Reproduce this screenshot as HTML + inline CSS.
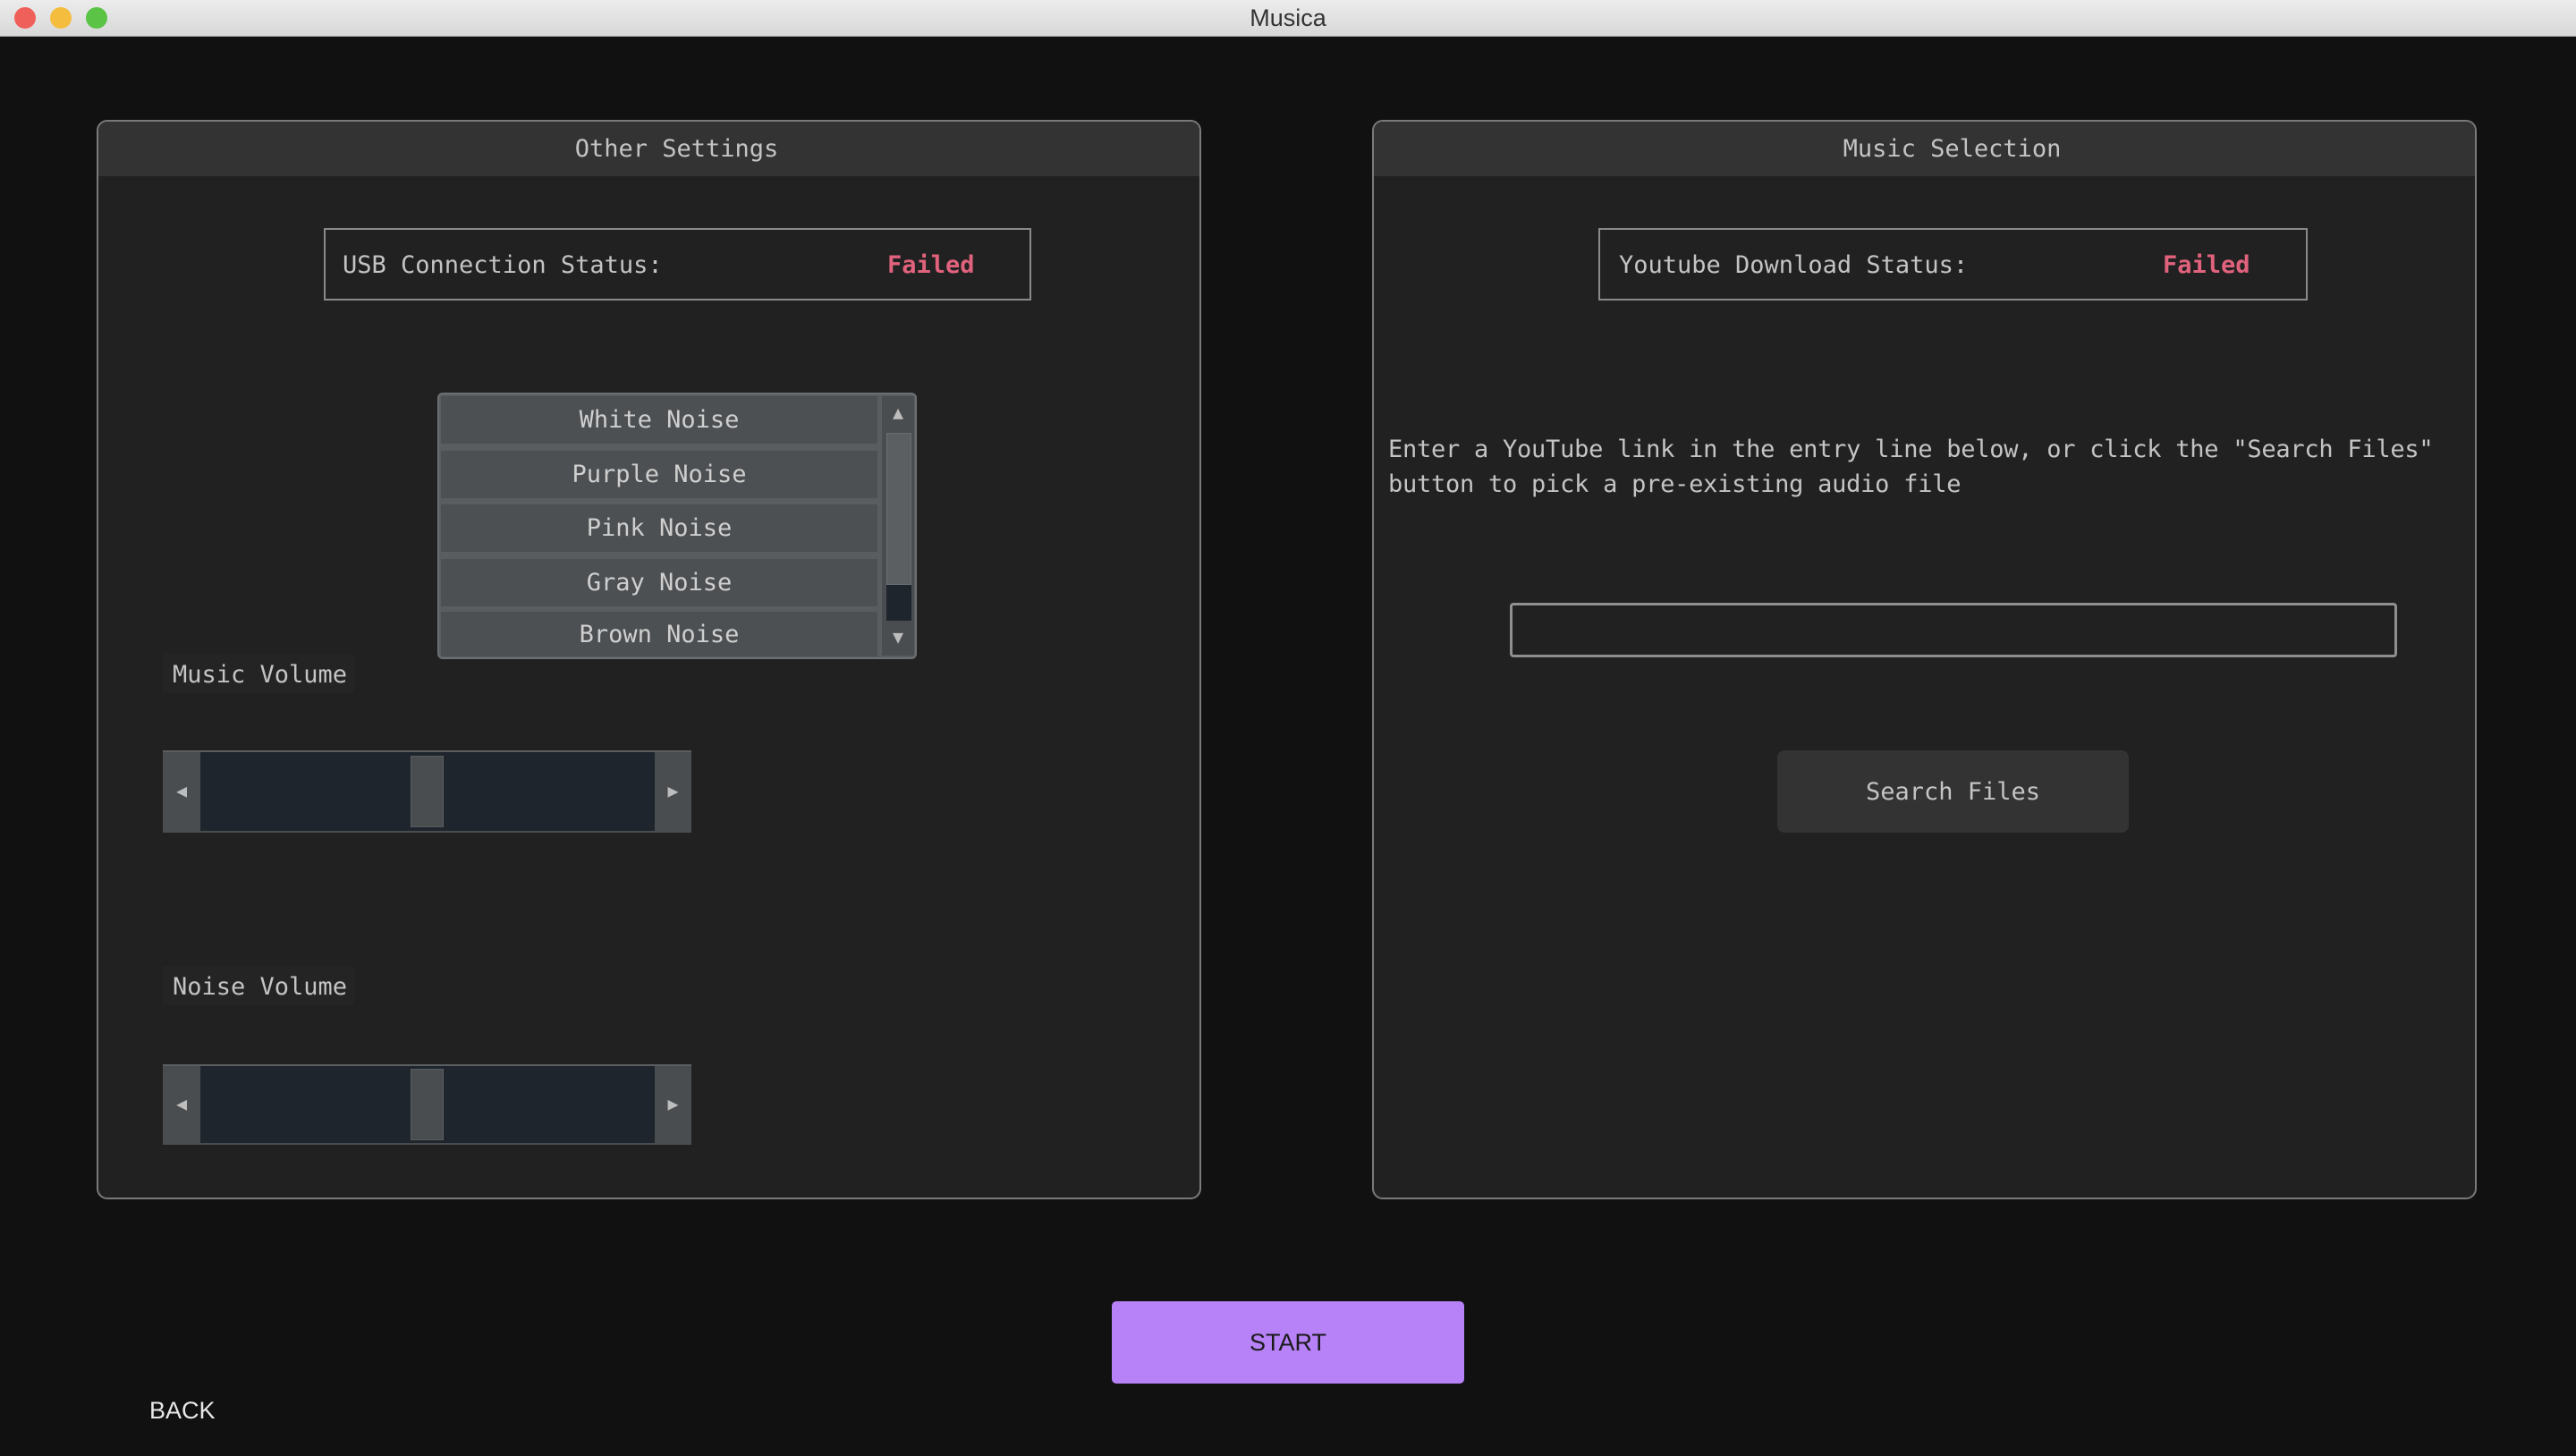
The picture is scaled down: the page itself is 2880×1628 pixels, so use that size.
<!DOCTYPE html>
<html><head><meta charset="utf-8"><style>
*{margin:0;padding:0;box-sizing:border-box}
body{width:2880px;height:1628px;background:#111;position:relative;overflow:hidden;font-family:"DejaVu Sans Mono","Liberation Mono",monospace;color:#c4c4c4;font-size:27px}
.a{position:absolute}
.tb{left:0;top:0;width:2880px;height:41px;background:linear-gradient(#ececec,#d8d8d8);border-bottom:1px solid #b0b0b0;text-align:center;font-family:"Liberation Sans",sans-serif;color:#333;font-size:27px;line-height:41px}
.dot{top:8px;width:24px;height:24px;border-radius:50%}
.panel{background:#212121;border:2px solid #7a7a7a;border-radius:12px;overflow:hidden}
.hdr{left:0;top:0;right:0;height:61px;background:#333;text-align:center;line-height:61px;padding-left:62px}
.box{border:2px solid #8a8a8a}
.fail{color:#e0627c;font-weight:bold}
.item{left:4px;width:488px;height:53px;background:#4d5053;text-align:center;line-height:53px;color:#cfcfcf}
.sl{background:#4a4d50;border-top:2px solid #5b5e61}
.trk{background:#1f252c}
.arr{color:#bdbdbd;font-size:20px;text-align:center}
</style></head><body>
<div class="a tb">Musica</div>
<div class="a dot" style="left:16px;background:#f0605a"></div>
<div class="a dot" style="left:56px;background:#f5bd3d"></div>
<div class="a dot" style="left:96px;background:#5bc346"></div>

<div class="a panel" style="left:108px;top:134px;width:1235px;height:1207px">
 <div class="a hdr">Other Settings</div>
</div>
<div class="a box" style="left:362px;top:255px;width:791px;height:81px"></div>
<div class="a" style="left:383px;top:281px">USB Connection Status:</div>
<div class="a fail" style="left:992px;top:281px">Failed</div>

<div class="a" style="left:489px;top:439px;width:536px;height:298px;background:#5a5d60;border:2px solid #6d7073;border-radius:6px"></div>
<div class="a item" style="left:493px;top:443px">White Noise</div>
<div class="a item" style="left:493px;top:504px">Purple Noise</div>
<div class="a item" style="left:493px;top:564px">Pink Noise</div>
<div class="a item" style="left:493px;top:625px">Gray Noise</div>
<div class="a item" style="left:493px;top:684px;height:50px;line-height:52px">Brown Noise</div>
<div class="a" style="left:986px;top:443px;width:36px;height:290px;background:#4a4d50"></div>
<div class="a arr" style="left:986px;top:449px;width:36px">▲</div>
<div class="a" style="left:991px;top:484px;width:28px;height:170px;background:#5c5f62;border:1px solid #6a6d70"></div>
<div class="a" style="left:991px;top:654px;width:28px;height:40px;background:#1f252c"></div>
<div class="a arr" style="left:986px;top:700px;width:36px">▼</div>

<div class="a" style="left:182px;top:731px;width:214px;height:44px;background:#242424"></div>
<div class="a" style="left:193px;top:739px">Music Volume</div>
<div class="a sl" style="left:182px;top:839px;width:591px;height:92px"></div>
<div class="a trk" style="left:224px;top:841px;width:508px;height:88px"></div>
<div class="a" style="left:459px;top:845px;width:37px;height:80px;background:#4a4d50;border:1px solid #5a5d60"></div>
<div class="a arr" style="left:182px;top:872px;width:42px">◀</div>
<div class="a arr" style="left:732px;top:872px;width:41px">▶</div>

<div class="a" style="left:182px;top:1080px;width:214px;height:44px;background:#242424"></div>
<div class="a" style="left:193px;top:1088px">Noise Volume</div>
<div class="a sl" style="left:182px;top:1190px;width:591px;height:90px"></div>
<div class="a trk" style="left:224px;top:1192px;width:508px;height:86px"></div>
<div class="a" style="left:459px;top:1195px;width:37px;height:80px;background:#4a4d50;border:1px solid #5a5d60"></div>
<div class="a arr" style="left:182px;top:1222px;width:42px">◀</div>
<div class="a arr" style="left:732px;top:1222px;width:41px">▶</div>

<div class="a panel" style="left:1534px;top:134px;width:1235px;height:1207px">
 <div class="a hdr">Music Selection</div>
</div>
<div class="a box" style="left:1787px;top:255px;width:793px;height:81px"></div>
<div class="a" style="left:1810px;top:281px">Youtube Download Status:</div>
<div class="a fail" style="left:2418px;top:281px">Failed</div>
<div class="a" style="left:1552px;top:483px;line-height:39px;width:1250px;letter-spacing:-0.25px">Enter a YouTube link in the entry line below, or click the "Search Files"<br>button to pick a pre-existing audio file</div>
<div class="a" style="left:1688px;top:674px;width:992px;height:61px;border:3px solid #8f8f8f;border-radius:4px"></div>
<div class="a" style="left:1987px;top:839px;width:393px;height:92px;background:#333;border-radius:8px;text-align:center;line-height:94px">Search Files</div>

<div class="a" style="left:1243px;top:1455px;width:394px;height:92px;background:#b781f7;border-radius:5px;text-align:center;line-height:92px;color:#1a1a1a;font-family:'Liberation Sans',sans-serif;font-size:27px">START</div>
<div class="a" style="left:167px;top:1562px;color:#e8e8e8;font-family:'Liberation Sans',sans-serif;font-size:27px">BACK</div>
</body></html>
